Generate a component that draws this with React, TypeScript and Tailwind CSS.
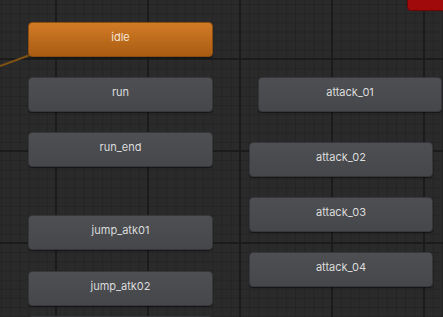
import React from "react";

type NodeProps = { label: string; x: number; y: number; w: number; orange?: boolean };

const nodes: NodeProps[] = [
  { label: "idle", x: 28, y: 22, w: 185, orange: true },
  { label: "run", x: 28, y: 77, w: 185 },
  { label: "run_end", x: 28, y: 132, w: 185 },
  { label: "jump_atk01", x: 28, y: 215, w: 185 },
  { label: "jump_atk02", x: 28, y: 271, w: 185 },
  { label: "", x: 28, y: 316, w: 185 },
  { label: "attack_01", x: 258, y: 77, w: 184 },
  { label: "attack_02", x: 249, y: 142, w: 184 },
  { label: "attack_03", x: 249, y: 197, w: 184 },
  { label: "attack_04", x: 249, y: 252, w: 184 },
];

function StateNode({ label, x, y, w, orange }: NodeProps) {
  return (
    <div
      className={
        "absolute h-[35px] rounded-[4px] border text-center text-[11px] leading-[13px] pt-[8px] shadow-[0_1px_1px_rgba(0,0,0,0.5)] " +
        (orange
          ? "border-[#8a4d12] bg-[linear-gradient(to_bottom,#d27b26,#a95c12)] text-[#f3e6d8]"
          : "border-[#35373a] bg-[linear-gradient(to_bottom,#4d4f53,#45474b)] text-[#dcdcdc]")
      }
      style={{ left: x, top: y, width: w, fontFamily: "Inter, 'Noto Sans', sans-serif" }}
    >
      {label}
    </div>
  );
}

export default function App() {
  return (
    <div className="relative w-[443px] h-[317px] overflow-hidden bg-[#2a2a2a]">
      <div className="absolute inset-0 bg-[linear-gradient(to_right,#242424_1px,transparent_1px),linear-gradient(to_bottom,#242424_1px,transparent_1px)] bg-[size:9.2px_9.2px] bg-[position:1px_4px]" />
      <div className="absolute inset-0 bg-[linear-gradient(to_right,#1b1b1b_2px,transparent_2px),linear-gradient(to_bottom,#1b1b1b_2px,transparent_2px)] bg-[size:92px_92px] bg-[position:55px_58px]" />
      <svg className="absolute left-0 top-0" width="443" height="317">
        <line x1="0" y1="66" x2="30" y2="55" stroke="#7d5213" strokeWidth="2" />
      </svg>
      <div className="absolute left-[407px] top-[-4px] w-[40px] h-[15px] rounded-[4px] bg-[#a00a0a] border border-[#6a0505]" />
      {nodes.map((n, i) => (
        <StateNode key={i} {...n} />
      ))}
    </div>
  );
}
